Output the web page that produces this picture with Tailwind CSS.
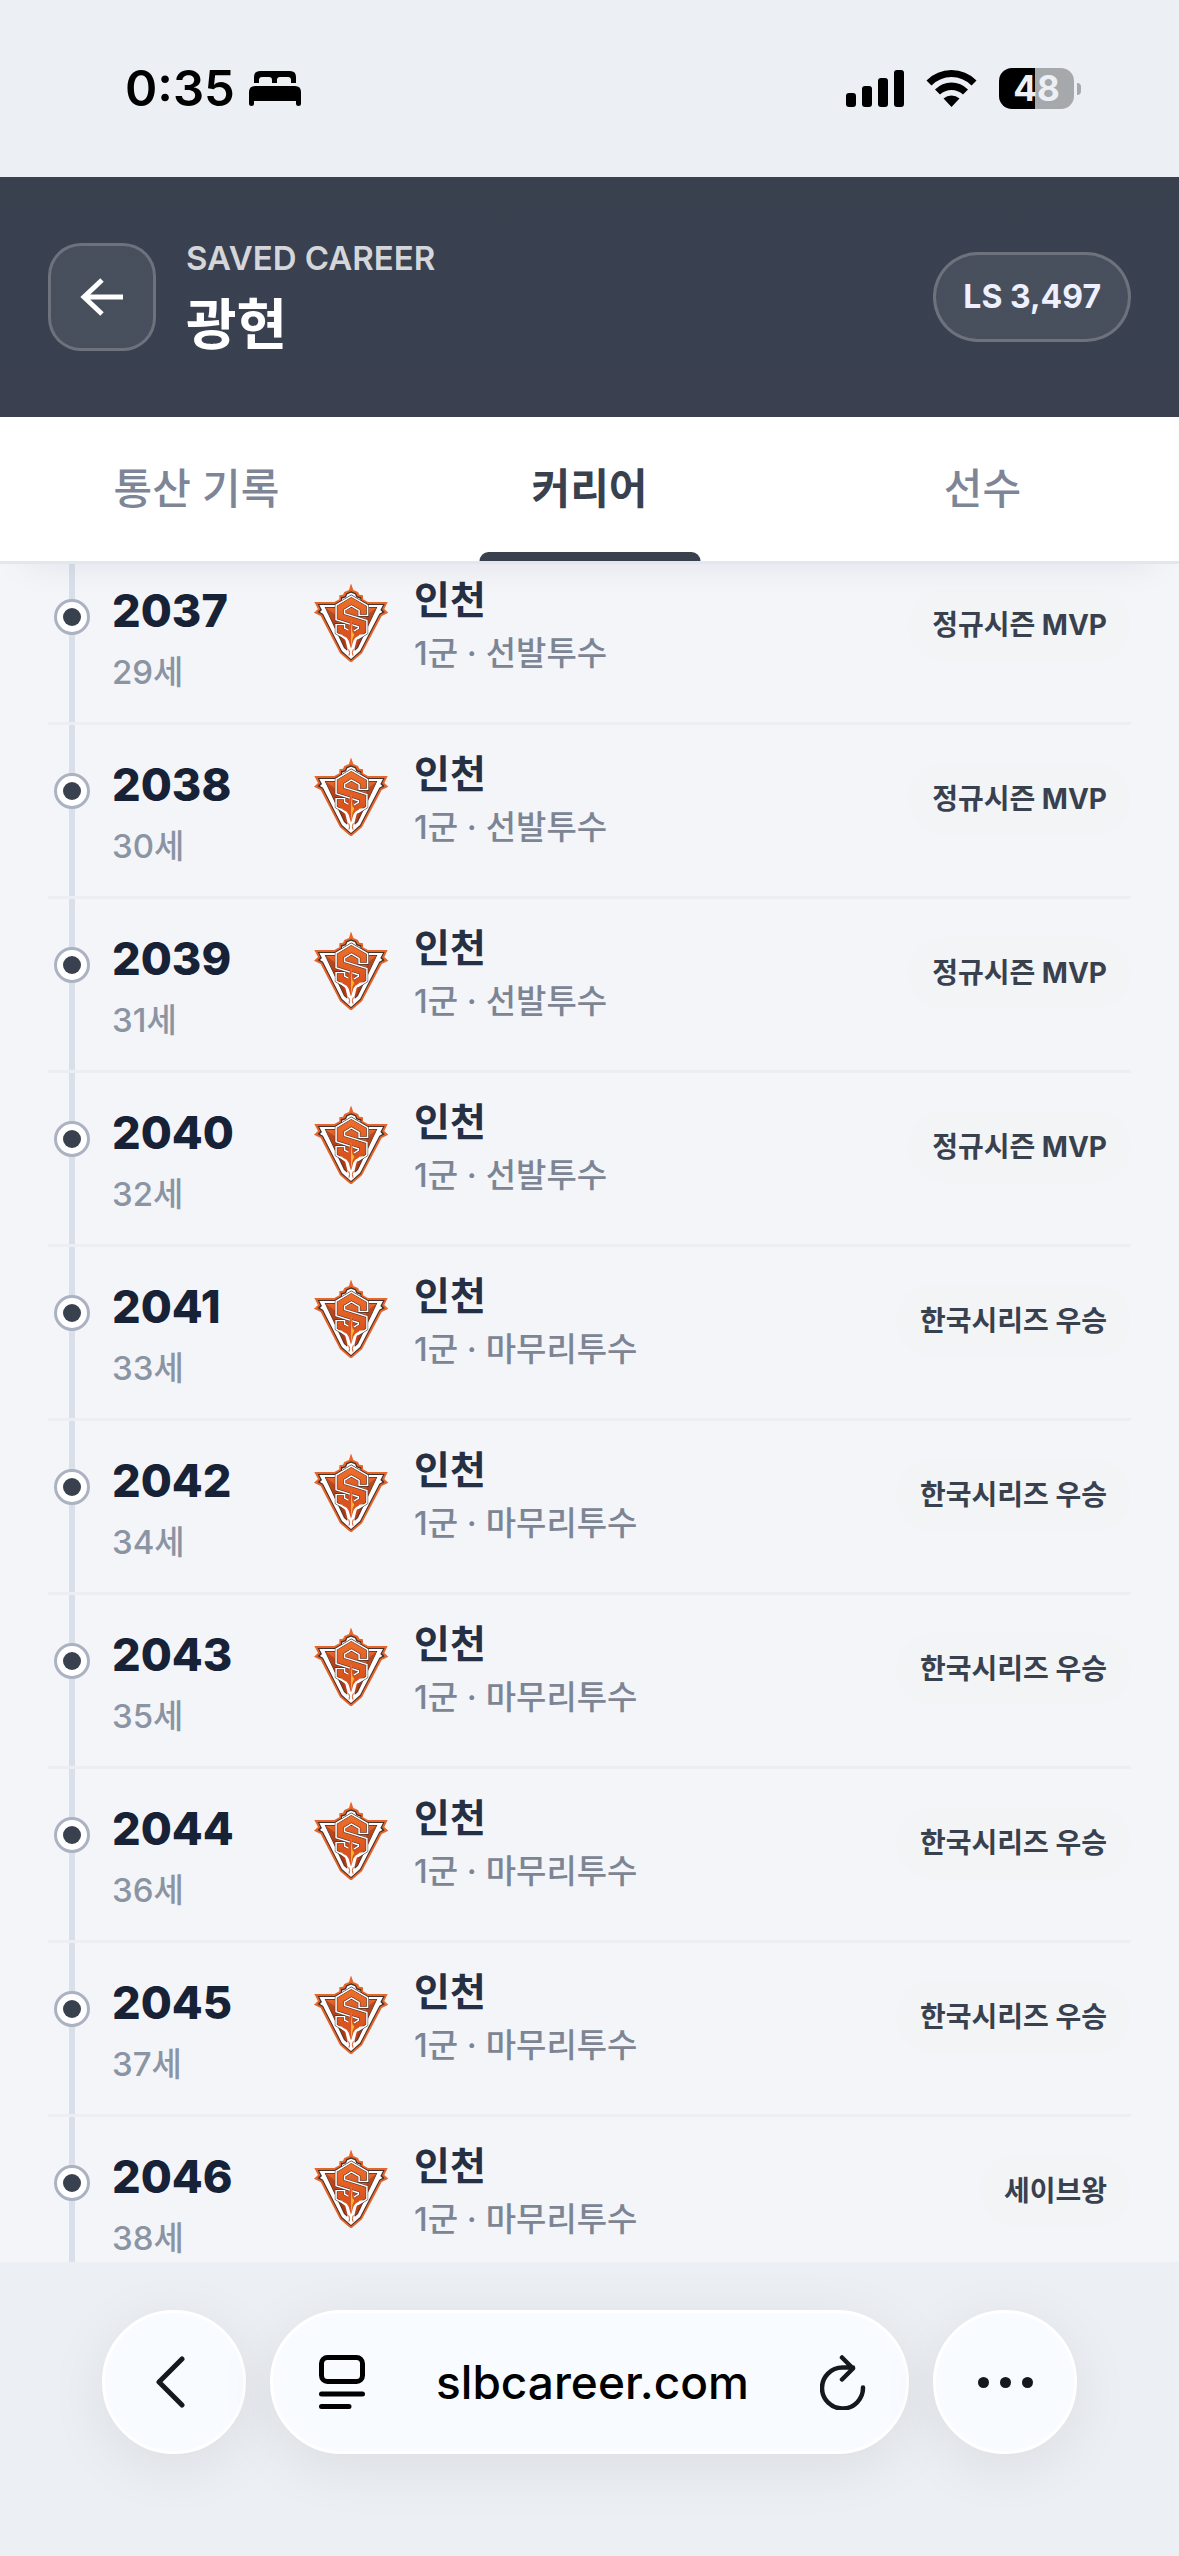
<!DOCTYPE html>
<html lang="ko">
<head>
  <meta charset="UTF-8" />
  <meta name="viewport" content="width=device-width, initial-scale=1.0"/>
  <title>광현 - 커리어</title>
  <script src="https://cdn.jsdelivr.net/npm/@tailwindcss/browser@4"></script>
</head>
<body class="flex h-screen flex-col overflow-hidden bg-[#ecf0f5] font-['Inter','Noto_Sans_CJK_KR',sans-serif]">

  <!-- Team logo, shared by every row -->
  <svg class="absolute size-0" aria-hidden="true">
    <defs>
      <linearGradient id="orange" x1="0" y1="80" x2="0" y2="200" gradientUnits="userSpaceOnUse">
        <stop offset="0" stop-color="#f0702c"/>
        <stop offset="1" stop-color="#d8501c"/>
      </linearGradient>
      <linearGradient id="rust" x1="0" y1="110" x2="0" y2="250" gradientUnits="userSpaceOnUse">
        <stop offset="0" stop-color="#e8692c"/>
        <stop offset="0.5" stop-color="#c4481c"/>
        <stop offset="1" stop-color="#b03c18"/>
      </linearGradient>
    </defs>
    <symbol id="teamLogo" viewBox="36 42 234 234">
      <path fill="#e8652a" d="M153 40L160 60L174 66L178 74L189 76V88L204 96H263L253 117L265 128L245 138L186 250L153 278L120 250L62 138L42 128L54 117L43 96H103L118 88V76L129 74L133 66L147 60Z"/>
      <path fill="#43312c" d="M153 64L168 70L172 79L184 82V91L203 102H254L246 118L254 127L240 134L182 246L153 271L124 246L67 134L53 127L61 118L53 102H104L123 91V82L135 79L139 70Z"/>
      <path fill="#fff" d="M153 68L165 73L169 82L181 86V92L202 105H249L241 120L247 126L238 131L180 243L153 267L126 243L69 131L60 126L66 120L58 105H105L126 92V86L138 82L142 73Z"/>
      <path fill="#43312c" d="M74 111H232L174 234L153 252L132 234Z"/>
      <path fill="url(#rust)" d="M77 113H229L172 232L153 249L134 232Z"/>
      <path fill="#8f2d14" opacity=".45" d="M77 113L112 138V160L136 222L134 232ZM229 113L198 138V160L172 222L172 232Z"/>
      <path fill="none" stroke="#43312c" stroke-width="33" d="M190 140V114L154 93L121 113V140L188 161V182L166 196M121 160V182L142 194"/>
      <path fill="none" stroke="#fff" stroke-width="30" d="M190 138V114L154 93L121 113V140L188 161V182L166 196M121 162V182L142 194"/>
      <path fill="none" stroke="#43312c" stroke-width="21" d="M190 134V114L154 93L121 113V140L188 161V182L166 195M121 166V182L142 193"/>
      <path fill="none" stroke="url(#orange)" stroke-width="18" d="M190 133V114L154 93L121 113V140L188 161V182L166 194M121 167V182L142 192"/>
      <path fill="#fff" d="M115 192L142 197L153 150L164 197L191 192L170 210L163 238H143L136 210Z"/>
      <path fill="#d9531e" d="M153 146L163 188L178 196L166 203L160 212L153 236L146 212L140 203L126 196L143 188Z"/>
      <path fill="#f9b233" d="M153 152V232L158 205L163 194L157 186Z"/>
      <circle cx="153" cy="247" r="13" fill="#fff"/>
      <path fill="none" stroke="#d9531e" stroke-width="3" d="M146 238Q151 247 147 257M160 238Q155 247 159 257"/>
    </symbol>
  </svg>

  <!-- Status bar -->
  <div class="flex h-[177px] shrink-0 items-center justify-between pr-[98px] pl-[125px]">
    <div class="flex items-center gap-[14px]">
      <span class="text-[49px] leading-[60px] font-semibold text-black">0:35</span>
      <svg class="h-[35px] w-[52px]" viewBox="0 0 52 35" role="img" aria-label="수면 모드">
        <path d="M5 12V6Q5 0 11 0H41Q47 0 47 6V12H42V9Q42 6 39 6H31Q28 6 28 9V12H23V9Q23 6 20 6H13Q10 6 10 9V12Z"/>
        <path d="M0 33V21Q0 15 6 15H46Q52 15 52 21V33Q52 35 49.500 35Q47 35 47 33V30H5V33Q5 35 2.500 35Q0 35 0 33Z"/>
      </svg>
    </div>
    <div class="flex items-center">
      <svg class="h-[37px] w-[58px]" viewBox="0 0 58 37" role="img" aria-label="신호">
        <rect x="0" y="23" width="10" height="14" rx="3"/>
        <rect x="16" y="16" width="10" height="21" rx="3"/>
        <rect x="32" y="8" width="10" height="29" rx="3"/>
        <rect x="48" y="0" width="10" height="37" rx="3"/>
      </svg>
      <svg class="ml-[22px] h-[37px] w-[51px]" viewBox="0 0 51 37" role="img" aria-label="와이파이">
        <path d="M0.500 10.500Q11 0 25.500 0Q40 0 50.500 10.500L45.500 15.500Q37 7 25.500 7Q14 7 5.500 15.500Z"/>
        <path d="M9 19.500Q16 12.500 25.500 12.500Q35 12.500 42 19.500L37 24.500Q32 20 25.500 20Q19 20 14 24.500Z"/>
        <path d="M17.500 28.500Q21 25.500 25.500 25.500Q30 25.500 33.500 28.500L25.500 37Z"/>
      </svg>
      <div class="ml-[22px] flex h-[41px] w-[75px] items-center justify-center rounded-[13px] bg-linear-to-r from-black from-48% to-[#a5a9ac] to-48%">
        <span class="text-[35px] leading-[41px] font-bold text-[#ecf0f5]">48</span>
      </div>
      <div class="ml-[3px] h-3 w-1 rounded-r-full bg-[#a5a9ac]"></div>
    </div>
  </div>

  <!-- Header -->
  <header class="flex h-[240px] shrink-0 items-center gap-[30px] bg-linear-to-b from-[#39414f] to-[#3a404f] px-12">
    <button aria-label="뒤로" class="flex size-[108px] items-center justify-center rounded-[33px] border-3 border-white/20 bg-white/8">
      <svg class="h-[38px] w-[44px]" viewBox="0 0 44 38" fill="none" stroke="#fff" stroke-width="5">
        <path d="M43 19H4M22 2L4 19L22 36"/>
      </svg>
    </button>
    <div class="flex-1">
      <p class="text-[33px] leading-[42px] font-semibold text-[#d5d6da]">SAVED CAREER</p>
      <h1 class="mt-3 text-[55px] leading-[66px] font-bold text-white">광현</h1>
    </div>
    <span class="flex h-[90px] items-center rounded-full border-3 border-white/20 bg-white/8 px-[27px] text-[32px] leading-[42px] font-bold text-[#eef0ff]">LS 3,497</span>
  </header>

  <!-- Tabs -->
  <nav class="relative z-10 grid h-[147px] shrink-0 grid-cols-3 border-b-3 border-[#e2e6ee] bg-white text-[42px] leading-[60px] text-[#7d8597] shadow-[0_24px_36px_-24px_rgba(15,23,42,0.08)]">
    <a href="#total" class="flex items-center justify-center font-medium">통산 기록</a>
    <a href="#career" aria-current="page" class="relative flex items-center justify-center font-bold text-[#39414f]">커리어
      <span class="absolute bottom-0 left-1/2 h-[9px] w-[221px] -translate-x-1/2 rounded-t-[9px] bg-[#39414f]"></span>
    </a>
    <a href="#player" class="flex items-center justify-center font-medium">선수</a>
  </nav>

  <!-- Season timeline, scrolled a little way under the tabs -->
  <main class="min-h-0 flex-1 overflow-hidden bg-[#f3f5f9] px-12">
    <ol id="seasonList" class="-mt-[13px]"></ol>
  </main>

  <!-- Browser toolbar -->
  <div class="flex shrink-0 gap-6 px-[102px] pt-12 pb-[102px]">
    <button aria-label="이전 페이지" class="flex size-36 items-center justify-center rounded-full border-3 border-white bg-[#f8fbff] shadow-[0_12px_60px_rgba(0,0,0,0.08)]">
      <svg class="mr-2 h-[54px] w-[30px]" viewBox="0 0 30 54" fill="none" stroke="#15181d" stroke-width="5" stroke-linecap="round" stroke-linejoin="round">
        <path d="M27 4L4 27L27 50"/>
      </svg>
    </button>
    <div class="flex h-36 flex-1 items-center justify-between rounded-full border-3 border-white bg-[#f8fbff] pr-10 pl-[46px] shadow-[0_12px_60px_rgba(0,0,0,0.08)]">
      <button aria-label="페이지 메뉴">
        <svg class="h-[54px] w-[46px]" viewBox="0 0 46 54" fill="none" stroke="#000" stroke-width="5" stroke-linecap="round">
          <rect x="2.500" y="2.500" width="41" height="24" rx="6"/>
          <path d="M2.500 39H43.500M2.500 51.500H30"/>
        </svg>
      </button>
      <button class="text-[46px] leading-[60px] font-medium text-black">slbcareer.com</button>
      <button aria-label="새로고침">
        <svg class="h-[56px] w-[46px]" viewBox="0 0 46 56" fill="none" stroke="#15181d" stroke-width="4.500" stroke-linecap="round" stroke-linejoin="round">
          <path d="M43 33.500A20.500 20.500 0 1 1 22.500 13.500H33M22 3.500L33 14.500L22 25.500"/>
        </svg>
      </button>
    </div>
    <button aria-label="더 보기" class="flex size-36 items-center justify-center gap-[11px] rounded-full border-3 border-white bg-[#f8fbff] shadow-[0_12px_60px_rgba(0,0,0,0.08)]">
      <span class="size-[11px] rounded-full bg-[#15181d]"></span>
      <span class="size-[11px] rounded-full bg-[#15181d]"></span>
      <span class="size-[11px] rounded-full bg-[#15181d]"></span>
    </button>
  </div>

  <script>
    const seasons = [
      { year: 2037, age: 29, role: "선발투수", award: "정규시즌 MVP" },
      { year: 2038, age: 30, role: "선발투수", award: "정규시즌 MVP" },
      { year: 2039, age: 31, role: "선발투수", award: "정규시즌 MVP" },
      { year: 2040, age: 32, role: "선발투수", award: "정규시즌 MVP" },
      { year: 2041, age: 33, role: "마무리투수", award: "한국시리즈 우승" },
      { year: 2042, age: 34, role: "마무리투수", award: "한국시리즈 우승" },
      { year: 2043, age: 35, role: "마무리투수", award: "한국시리즈 우승" },
      { year: 2044, age: 36, role: "마무리투수", award: "한국시리즈 우승" },
      { year: 2045, age: 37, role: "마무리투수", award: "한국시리즈 우승" },
      { year: 2046, age: 38, role: "마무리투수", award: "세이브왕" }
    ];

    document.getElementById("seasonList").innerHTML = seasons.map(s => `
      <li class="relative flex h-[174px] items-start border-b-3 border-[#eceef3] pl-16">
        <span class="absolute inset-y-0 left-[21px] w-[6px] bg-[#dae0ea]"></span>
        <span class="absolute top-12 left-[6px] flex size-9 items-center justify-center rounded-full border-3 border-[#abb2c1] bg-white">
          <span class="size-[18px] rounded-full bg-[#39414f]"></span>
        </span>
        <div class="w-[200px] pt-9">
          <p class="text-[45px] leading-[48px] font-extrabold text-[#172236]">${s.year}</p>
          <p class="mt-4 text-[33px] leading-[42px] font-medium text-[#8b94a3]">${s.age}세</p>
        </div>
        <svg class="mt-[33px] size-[78px]" role="img" aria-label="인천"><use href="#teamLogo"/></svg>
        <div class="ml-6 flex-1 pt-[25px]">
          <p class="text-[39px] leading-[48px] font-bold text-[#263044]">인천</p>
          <p class="mt-2 text-[33px] leading-[42px] font-medium text-[#7d8594]">1군 · ${s.role}</p>
        </div>
        <span class="mt-[38px] flex h-[72px] items-center rounded-full bg-[#f3f4f6] px-6 text-[28px] leading-[34px] font-bold text-[#39414f]">${s.award}</span>
      </li>`).join("");
  </script>
</body>
</html>
